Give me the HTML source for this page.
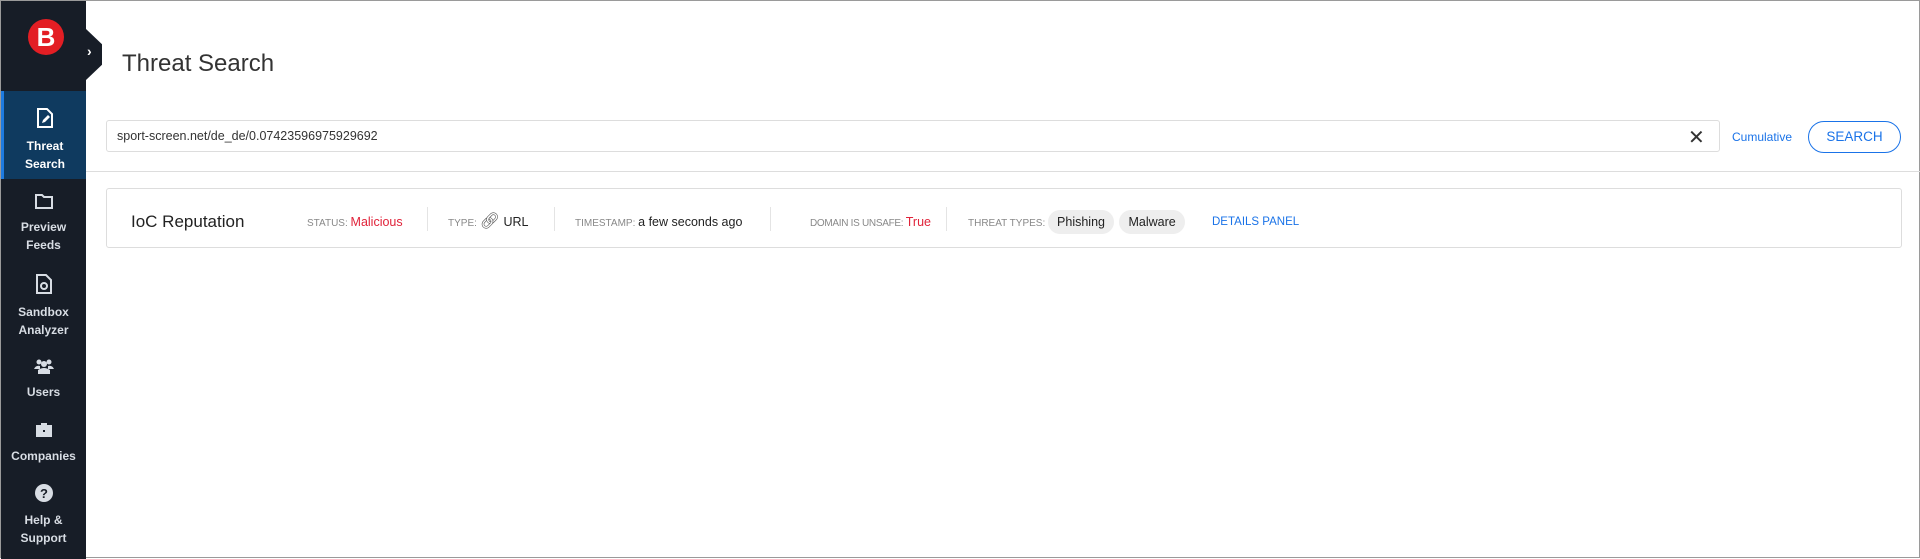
<!DOCTYPE html>
<html><head><style>
*{margin:0;padding:0;box-sizing:border-box}
body{width:1920px;height:558px;background:#fff;font-family:"Liberation Sans",sans-serif;position:relative;overflow:hidden;border:1px solid #9a9a9a}
.sb{position:absolute;left:0;top:0;width:85px;height:558px;background:#171d27}
.logo{position:absolute;left:27px;top:18px;width:36px;height:36px;border-radius:50%;background:#e31e24;color:#fff;font-weight:bold;font-size:26px;text-align:center;line-height:36px}
.tab{position:absolute;left:85px;top:28px;width:16px;height:51px;background:#171d27;clip-path:polygon(0 0,100% 30%,100% 70%,0 100%)}
.tab span{position:absolute;left:1px;top:14px;color:#fff;font-size:14px;font-weight:bold}
.nav{position:absolute;left:0;width:85px;text-align:center;color:#d8dde4;font-size:12px;font-weight:bold;line-height:18px}
.nav svg{display:block;margin:0 auto 9px}
.act{background:#0f3a5f;border-left:3px solid #1e7be0;color:#fff}
h1{position:absolute;left:121px;top:49px;font-size:24px;font-weight:normal;color:#333}
.inp{position:absolute;left:105px;top:119px;width:1614px;height:32px;border:1px solid #ddd;border-radius:3px;font-size:12.5px;color:#333;padding:8px 10px}
.x{position:absolute;left:1687px;top:124px;font-size:20px;color:#333}
.cum{position:absolute;left:1731px;top:129px;font-size:12px;color:#1a73e8}
.btn{position:absolute;left:1807px;top:120px;width:93px;height:32px;border:1px solid #1a73e8;border-radius:16px;color:#1a73e8;font-size:13.5px;text-align:center;line-height:30px}
.hr{position:absolute;left:85px;top:170px;width:1835px;height:1px;background:#ddd}
.card{position:absolute;left:105px;top:187px;width:1796px;height:60px;border:1px solid #ddd;border-radius:3px}
.c{position:absolute;top:4px;height:58px;line-height:58px;font-size:12.5px;color:#222;white-space:nowrap}
.l{font-size:10px;color:#888}
.d{position:absolute;top:18px;width:1px;height:24px;background:#e4e4e4}
.pill{display:inline-block;background:#eee;border-radius:12px;padding:0 9px;line-height:24px;margin-right:2px}
</style></head><body>
<div class="sb">
<div class="logo">B</div>
<div class="nav act" style="top:90px;height:88px;padding-top:17px"><svg width="16" height="20" viewBox="0 0 16 20"><path d="M1 1h9l5 5v13H1z" fill="none" stroke="#fff" stroke-width="2"/><path d="M5 15l1-3 5-5 2 2-5 5z" fill="#fff"/></svg>Threat<br>Search</div>
<div class="nav" style="top:192px"><svg width="18" height="16" viewBox="0 0 18 16"><path d="M1 2h6l2 2h8v11H1z" fill="none" stroke="#d8dde4" stroke-width="2"/></svg>Preview<br>Feeds</div>
<div class="nav" style="top:273px"><svg width="16" height="20" viewBox="0 0 16 20"><path d="M1 1h9l5 5v13H1z" fill="none" stroke="#d8dde4" stroke-width="2"/><circle cx="8" cy="12" r="3" fill="none" stroke="#d8dde4" stroke-width="2"/></svg>Sandbox<br>Analyzer</div>
<div class="nav" style="top:357px"><svg width="20" height="16" viewBox="0 0 20 16"><circle cx="5" cy="4" r="2.5" fill="#d8dde4"/><circle cx="15" cy="4" r="2.5" fill="#d8dde4"/><circle cx="10" cy="6" r="3" fill="#d8dde4"/><path d="M4 16v-4q6-4 12 0v4z M0 11q2-4 6-3v3z M20 11q-2-4-6-3v3z" fill="#d8dde4"/></svg>Users</div>
<div class="nav" style="top:421px"><svg width="18" height="16" viewBox="0 0 18 16"><path d="M6 3V1h6v2h5v12H1V3z" fill="#d8dde4"/><rect x="8" y="8" width="2" height="2" fill="#171d27"/></svg>Companies</div>
<div class="nav" style="top:483px"><svg width="18" height="18" viewBox="0 0 18 18"><circle cx="9" cy="9" r="9" fill="#d8dde4"/><text x="9" y="14" font-size="13" font-weight="bold" text-anchor="middle" fill="#171d27" font-family="Liberation Sans">?</text></svg>Help &amp;<br>Support</div>
</div>
<div class="tab"><span>&#x203A;</span></div>
<h1>Threat Search</h1>
<div class="inp">sport-screen.net/de_de/0.07423596975929692</div>
<div class="x">&#x2715;</div>
<div class="cum">Cumulative</div>
<div class="btn">SEARCH</div>
<div class="hr"></div>
<div class="card">
<div class="c" style="left:24px;font-size:17px">IoC Reputation</div>
<div class="c" style="left:200px"><span class="l">STATUS: </span><span style="color:#e0233a">Malicious</span></div>
<div class="d" style="left:320px"></div>
<div class="c" style="left:341px"><span class="l">TYPE: </span><span style="font-size:16px;color:#555">&#x1F517;&#xFE0E;</span> URL</div>
<div class="d" style="left:447px"></div>
<div class="c" style="left:468px"><span class="l">TIMESTAMP: </span>a few seconds ago</div>
<div class="d" style="left:663px"></div>
<div class="c" style="left:703px"><span class="l" style="letter-spacing:-0.3px">DOMAIN IS UNSAFE: </span><span style="color:#e0233a">True</span></div>
<div class="d" style="left:839px"></div>
<div class="c" style="left:861px"><span class="l">THREAT TYPES: </span><span class="pill">Phishing</span> <span class="pill">Malware</span></div>
<div class="c" style="left:1105px;color:#1a73e8;font-size:11.5px">DETAILS PANEL</div>
</div>
</body></html>
